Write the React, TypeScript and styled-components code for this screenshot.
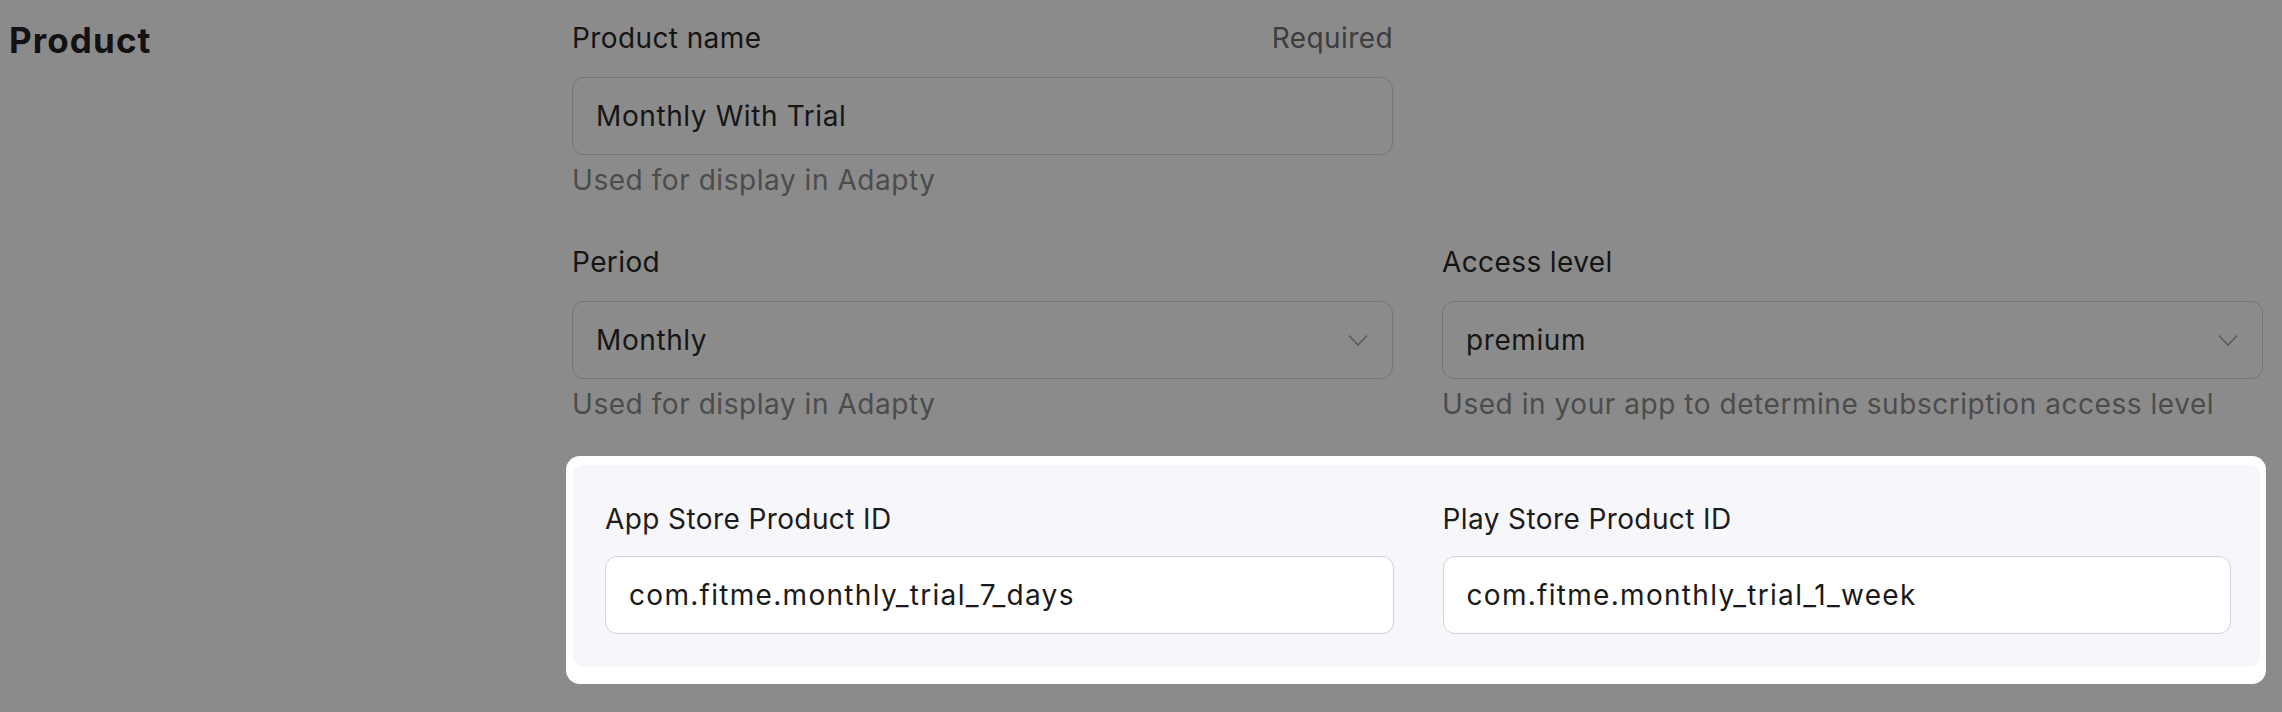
import styled, { createGlobalStyle } from "styled-components";

const GlobalStyle = createGlobalStyle`
  body {
    margin: 0;
    background: #8b8b8b;
    font-family: Inter, "Noto Sans", sans-serif;
  }
`;

const Page = styled.div`
  display: flex;
  min-height: 712px;
  padding-left: 9px;
  box-sizing: border-box;
`;

const Aside = styled.div`
  width: 563px;
  flex: none;
  padding-top: 18px;
`;

const Title = styled.h2`
  margin: 0;
  font-size: 35px;
  line-height: 44px;
  font-weight: 700;
  letter-spacing: 1.1px;
  color: #121212;
`;

const Form = styled.div`
  width: 1691px;
  padding-top: 18px;
  display: flex;
  flex-direction: column;
`;

const Row = styled.div<{ $gap: number }>`
  display: grid;
  grid-template-columns: 821px 821px;
  column-gap: 49px;
  margin-bottom: ${({ $gap }) => $gap}px;
`;

const Field = styled.div`
  display: flex;
  flex-direction: column;
  min-width: 0;
`;

const LabelRow = styled.div<{ $light?: boolean }>`
  display: flex;
  justify-content: space-between;
  font-size: 28px;
  line-height: 40px;
  letter-spacing: 0.4px;
  color: ${({ $light }) => ($light ? "#1c1c1c" : "#141414")};
`;

const Required = styled.span`
  color: #3d3d3d;
`;

const Box = styled.div<{ $light?: boolean }>`
  height: 78px;
  box-sizing: border-box;
  margin-top: ${({ $light }) => ($light ? "17px" : "19px")};
  padding: 0 24px 0 23px;
  display: flex;
  align-items: center;
  justify-content: space-between;
  border: 1.5px solid ${({ $light }) => ($light ? "#d2d1d6" : "#767676")};
  border-radius: 12px;
  background: ${({ $light }) => ($light ? "#ffffff" : "transparent")};
  font-size: 28px;
  letter-spacing: ${({ $light }) => ($light ? "1.3px" : "0.6px")};
  color: ${({ $light }) => ($light ? "#1a1a1a" : "#161616")};
`;

const Help = styled.div`
  margin-top: 5px;
  font-size: 28px;
  line-height: 40px;
  letter-spacing: 0.55px;
  color: #4c4c4c;
`;

const Spotlight = styled.div`
  margin: -11px -3px 0 -6px;
  padding: 9px 6px 17px 7px;
  background: #ffffff;
  border-radius: 14px;
`;

const Card = styled.div`
  display: grid;
  grid-template-columns: 1fr 1fr;
  column-gap: 49px;
  padding: 34px 29px 33px 32px;
  background: #f7f6fb;
  border-radius: 10px;
`;

function Chevron() {
  return (
    <svg width="20" height="13" viewBox="0 0 20 13" fill="none">
      <polyline points="1,1.5 10,11 19,1.5" stroke="#5c5c5c" strokeWidth="1.6" />
    </svg>
  );
}

interface TextFieldProps {
  label: string;
  value: string;
  help?: string;
  required?: boolean;
  select?: boolean;
  light?: boolean;
}

function TextField({ label, value, help, required, select, light }: TextFieldProps) {
  return (
    <Field>
      <LabelRow $light={light}>
        <span>{label}</span>
        {required && <Required>Required</Required>}
      </LabelRow>
      <Box $light={light}>
        <span>{value}</span>
        {select && <Chevron />}
      </Box>
      {help && <Help>{help}</Help>}
    </Field>
  );
}

export default function App() {
  return (
    <>
      <GlobalStyle />
      <Page>
        <Aside>
          <Title>Product</Title>
        </Aside>
        <Form>
          <Row $gap={42}>
            <TextField
              label="Product name"
              value="Monthly With Trial"
              help="Used for display in Adapty"
              required
            />
          </Row>
          <Row $gap={43}>
            <TextField label="Period" value="Monthly" help="Used for display in Adapty" select />
            <TextField
              label="Access level"
              value="premium"
              help="Used in your app to determine subscription access level"
              select
            />
          </Row>
          <Spotlight>
            <Card>
              <TextField label="App Store Product ID" value="com.fitme.monthly_trial_7_days" light />
              <TextField label="Play Store Product ID" value="com.fitme.monthly_trial_1_week" light />
            </Card>
          </Spotlight>
        </Form>
      </Page>
    </>
  );
}
